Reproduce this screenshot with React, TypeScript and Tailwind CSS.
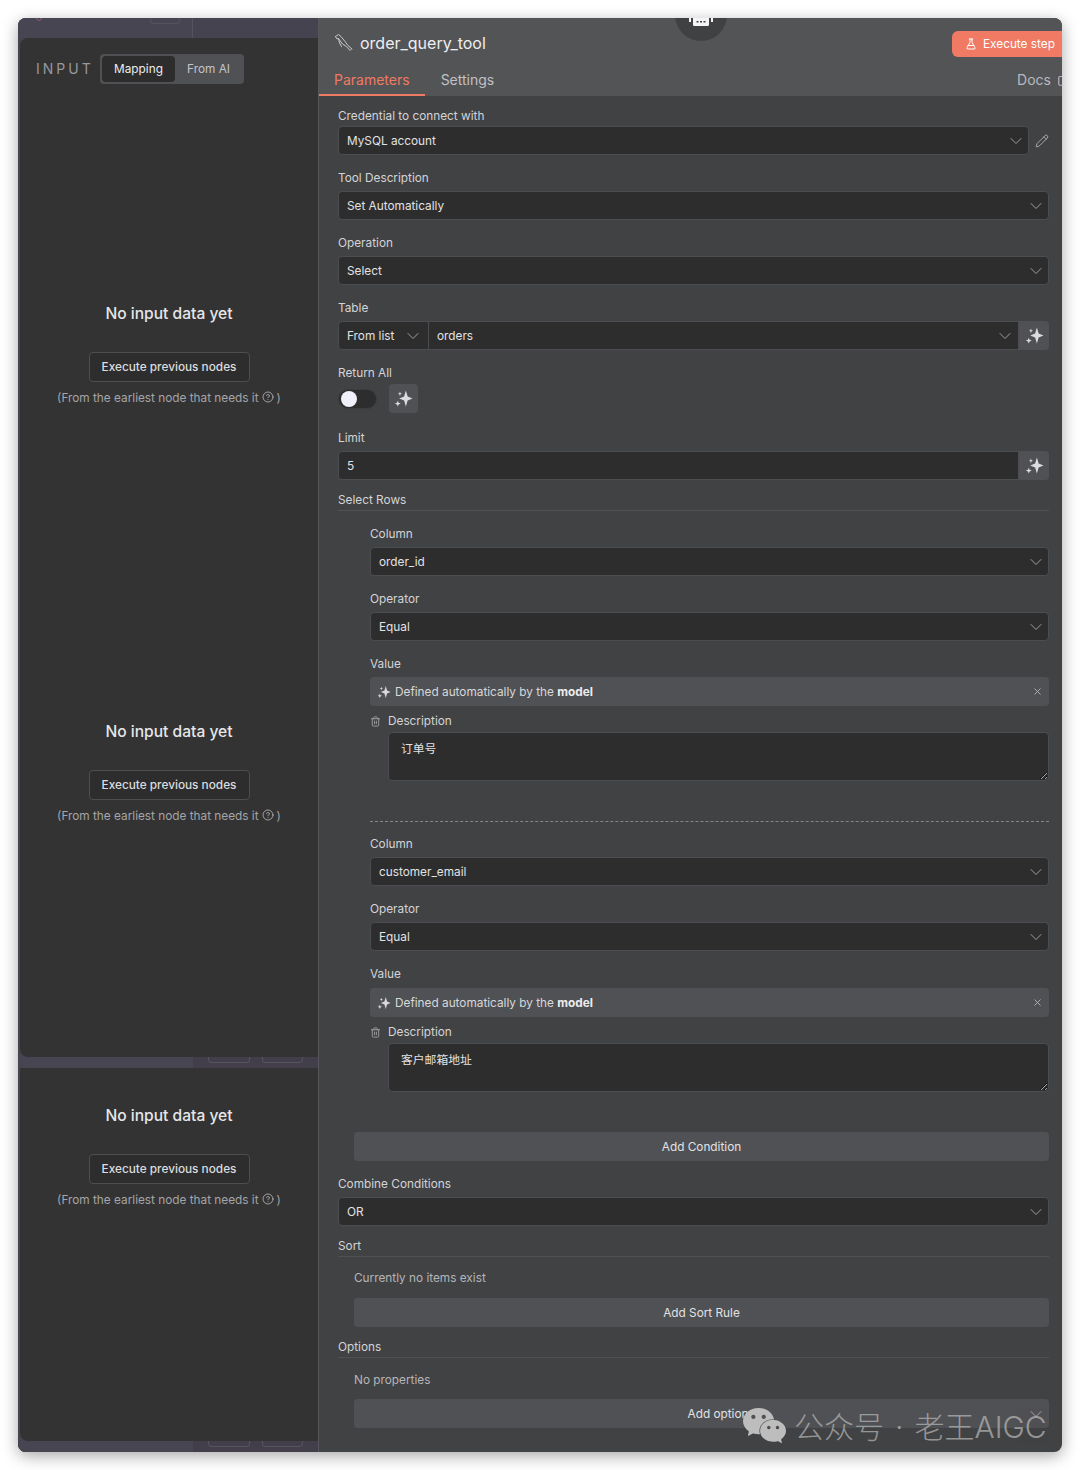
import { ChevronDown, CircleHelp, ExternalLink, FlaskConical, Pencil, Trash2, X } from "lucide-react";
import { SiWechat } from "react-icons/si";

const Sparkle = ({ className }: { className?: string }) => (
    <svg viewBox="0 0 16 16" className={className} fill="currentColor">
        <path d="M10 1.2 11.5 6.3 15.6 8 11.5 9.7 10 14.8 8.5 9.7 4.4 8 8.5 6.3Z" />
        <path d="M5 2 5.5 3.5 6.8 4 5.5 4.5 5 6 4.5 4.5 3.2 4 4.5 3.5Z" />
        <path d="M3.2 9.8 3.9 11.6 5.7 12.3 3.9 13 3.2 14.8 2.5 13 0.7 12.3 2.5 11.6Z" />
    </svg>
);

const Dolphin = () => (
    <svg viewBox="0 0 20 20" className="w-[20px] h-[20px] text-[#c8c8cc]" fill="none" stroke="currentColor" strokeWidth={1} strokeLinejoin="round" strokeLinecap="round">
        <path d="M1.5 3.5 4.5 1.5 7 3.5 11 8.5 14 12.5 18 16" />
        <path d="M1.5 3.5 3 6 4.5 5.5 5.5 10 7.5 13.5" />
        <path d="M4.5 5.5 8.5 11 12.5 13.5 16 17.5 17 16.5" />
    </svg>
);

const Chevron = () => <ChevronDown className="w-5 h-5 shrink-0 text-[#b5b5b8]" strokeWidth={1} />;

const Label = ({ children, className = "" }: { children: React.ReactNode; className?: string }) => (
    <div className={`h-[18px] leading-[18px] text-[11.8px] text-[#d4d4d6] ${className}`}>{children}</div>
);

const Select = ({ value, className = "" }: { value: string; className?: string }) => (
    <div className={`h-[29px] flex items-center justify-between pl-2 pr-[2px] bg-[#2d2d2d] border border-[#4c4d50] rounded text-[11.8px] text-[#e2e2e4] ${className}`}>
        <span className="pt-[2px]">{value}</span>
        <Chevron />
    </div>
);

const SelectField = ({ label, value, className = "" }: { label: string; value: string; className?: string }) => (
    <div className={className}>
        <Label className="mb-1">{label}</Label>
        <Select value={value} />
    </div>
);

const Section = ({ title, className = "" }: { title: string; className?: string }) => (
    <div className={`border-b border-[#505154] pb-px ${className}`}>
        <Label>{title}</Label>
    </div>
);

const WideButton = ({ children, className = "" }: { children: React.ReactNode; className?: string }) => (
    <div className={`ml-[16px] h-[29px] flex items-center justify-center pt-[2px] bg-[#505154] rounded text-[11.8px] text-[#e2e2e4] ${className}`}>
        {children}
    </div>
);

const Condition = ({ column, description, valueGap }: { column: string; description: string; valueGap: string }) => (
    <div className="pl-[32px]">
        <SelectField label="Column" value={column} />
        <SelectField label="Operator" value="Equal" className="mt-[14px]" />
        <div className="mt-[14px]">
            <Label className={valueGap}>Value</Label>
            <div className="h-[29px] flex items-center pl-[7px] pr-[6px] bg-[#505154] rounded text-[11.8px] text-[#d8d8da]">
                <Sparkle className="w-[14px] h-[14px] mr-1 text-[#d8d8da]" />
                <span className="pt-[2px]">
                    Defined automatically by the <b className="font-bold text-[#ececee]">model</b>
                </span>
                <X className="w-[11px] h-[11px] ml-auto text-[#b5b5b8]" />
            </div>
        </div>
        <div className="mt-[6px] flex items-center">
            <Trash2 className="w-[11px] h-[11px] mr-[7px] text-[#a0a0a4]" />
            <Label>Description</Label>
        </div>
        <div className="mt-[2px] pl-[18px]">
            <textarea
                readOnly
                value={description}
                className="block w-full h-[49px] px-3 py-2 bg-[#2d2d2d] border border-[#4c4d50] rounded text-[11.8px] leading-[16px] text-[#e2e2e4] resize-y outline-none"
            />
        </div>
    </div>
);

const TopStrip = () => (
    <div className="h-[20px] shrink-0 flex bg-[#474552]">
        <div className="ml-[18px] -mt-[3px] w-[6px] h-[6px] rounded-full border border-[#8a5a78]" />
        <div className="ml-[108px] w-[30px] h-[6px] border border-t-0 border-[#55535e] rounded-b" />
        <div className="ml-[12px] w-px h-full bg-[#55535e]" />
        <div className="flex-1 bg-[#45434f]" />
    </div>
);

const CanvasStrip = ({ className }: { className: string }) => (
    <div className={`flex shrink-0 bg-[#454450] ${className}`}>
        <div className="w-[175px] shrink-0 bg-[#474552]" />
        <div className="flex-1 bg-[#423f4b] flex gap-[12px] pl-[15px] overflow-hidden">
            <div className="w-[42px] h-[6px] border border-t-0 border-[#57555f] rounded-b" />
            <div className="w-[41px] h-[6px] border border-t-0 border-[#57555f] rounded-b" />
        </div>
    </div>
);

const NoInput = ({ className = "" }: { className?: string }) => (
    <div className={`flex flex-col items-center ${className}`}>
        <div className="h-[18px] leading-[20px] text-[15.6px] font-medium text-[#e6e6e8]">No input data yet</div>
        <div className="mt-[30px] w-[161px] h-[30px] flex items-center justify-center pt-[2px] bg-[#2d2d2d] border border-[#4c4d50] rounded text-[11.8px] font-medium text-[#dcdcde]">
            Execute previous nodes
        </div>
        <div className="mt-[7px] h-[16px] flex items-center pt-[4px] text-[11.8px] text-[#a5a5a9]">
            (From the earliest node that needs it
            <CircleHelp className="w-[12px] h-[12px] mx-[3px] -mt-[4px] text-[#c4c4c8]" strokeWidth={1.5} />)
        </div>
    </div>
);

export default function App() {
    return (
        <div className="w-[1080px] h-[1470px] bg-white p-[18px] font-['Inter','Noto_Sans_CJK_SC',sans-serif]">
            <div className="relative w-[1044px] h-[1434px] flex overflow-hidden rounded-lg bg-[#414244] shadow-[0_4px_16px_rgba(0,0,0,0.35)]">
                {/* input column */}
                <div className="w-[300px] shrink-0 flex flex-col bg-[#454450]">
                    <TopStrip />
                    <div className="ml-[2px] h-[1019px] bg-[#333333] rounded-l-lg">
                        <div className="flex items-center pl-[16px] pt-[16px]">
                            <span className="w-[64px] -mt-[2px] text-[14px] tracking-[3px] text-[#98989c]">INPUT</span>
                            <div className="flex h-[30px] p-[2px] bg-[#505154] rounded text-[11.8px]">
                                <div className="w-[73px] flex items-center justify-center pt-[2px] bg-[#2d2d2d] rounded text-[#ececee]">Mapping</div>
                                <div className="w-[67px] flex items-center justify-center pt-[2px] text-[#c4c4c8]">From AI</div>
                            </div>
                        </div>
                        <NoInput className="mt-[220px]" />
                        <NoInput className="mt-[317px]" />
                    </div>
                    <CanvasStrip className="h-[11px]" />
                    <div className="ml-[2px] h-[373px] bg-[#333333] rounded-bl-lg pt-[38px]">
                        <NoInput />
                    </div>
                    <CanvasStrip className="h-[11px]" />
                </div>

                {/* parameters column */}
                <div className="flex-1 min-w-0 flex flex-col border-l border-[#56575a]">
                    <div className="h-[78px] shrink-0 bg-[#535456]">
                        <div className="flex items-center pt-[13px] pl-[15px]">
                            <div className="-mt-[2px]"><Dolphin /></div>
                            <span className="ml-[6px] -mt-[2px] text-[16px] text-[#eeeef0]">order_query_tool</span>
                            <div className="ml-auto w-[110px] h-[26px] flex items-center pl-[13px] gap-[6px] bg-[#f07a64] rounded-l-md text-[11.8px] text-white">
                                <FlaskConical className="w-[12px] h-[12px]" />
                                <span className="pt-px">Execute step</span>
                            </div>
                        </div>
                        <div className="mt-[14px] flex items-start text-[14px] leading-[18px]">
                            <div className="h-[25px] px-[15px] border-b-2 border-[#ee7a64] text-[#ee7a64]">Parameters</div>
                            <div className="ml-[16px] text-[#c0c0c6]">Settings</div>
                            <div className="ml-auto -mr-[9px] flex items-center gap-[6px] text-[#b8b8be]">
                                Docs
                                <ExternalLink className="w-[14px] h-[14px]" />
                            </div>
                        </div>
                    </div>

                    <div className="pt-[11px] pl-[19px] pr-[13px] flex flex-col">
                        <div className="flex items-end">
                            <div className="flex-1">
                                <Label className="mb-px">Credential to connect with</Label>
                                <Select value="MySQL account" />
                            </div>
                            <div className="w-[20px] h-[29px] flex items-center justify-end pt-px">
                                <Pencil className="w-[14px] h-[14px] text-[#c8c8cc]" strokeWidth={1.3} />
                            </div>
                        </div>
                        <SelectField label="Tool Description" value="Set Automatically" className="mt-[14px]" />
                        <SelectField label="Operation" value="Select" className="mt-[14px]" />
                        <div className="mt-[14px]">
                            <Label className="mb-1">Table</Label>
                            <div className="flex h-[29px] text-[11.8px] text-[#e2e2e4]">
                                <div className="w-[91px] flex items-center justify-between pl-2 pr-[5px] bg-[#2d2d2d] border border-[#4c4d50] rounded-l">
                                    <span className="pt-[2px]">From list</span>
                                    <Chevron />
                                </div>
                                <div className="flex-1 flex items-center justify-between pl-2 pr-[3px] bg-[#2d2d2d] border-y border-r border-[#4c4d50]">
                                    <span className="pt-[2px]">orders</span>
                                    <Chevron />
                                </div>
                                <div className="w-[30px] flex items-center justify-center bg-[#505154] rounded-r">
                                    <Sparkle className="w-[19px] h-[19px] text-[#dcdcde]" />
                                </div>
                            </div>
                        </div>
                        <div className="mt-[14px]">
                            <Label>Return All</Label>
                            <div className="h-[33px] flex items-center gap-[12px]">
                                <div className="w-[39px] h-[20px] flex items-center pl-[2px] bg-[#2d2d2d] border border-[#3b3c3e] rounded-full">
                                    <div className="w-[16px] h-[16px] rounded-full bg-[#f0f0fa]" />
                                </div>
                                <div className="w-[29px] h-[29px] flex items-center justify-center bg-[#505154] rounded">
                                    <Sparkle className="w-[19px] h-[19px] text-[#dcdcde]" />
                                </div>
                            </div>
                        </div>
                        <div className="mt-[14px]">
                            <Label className="mb-1">Limit</Label>
                            <div className="flex h-[29px] text-[11.8px] text-[#e2e2e4]">
                                <div className="flex-1 flex items-center pl-2 pt-[2px] bg-[#2d2d2d] border border-[#4c4d50] rounded-l">5</div>
                                <div className="w-[30px] flex items-center justify-center bg-[#505154] rounded-r">
                                    <Sparkle className="w-[19px] h-[19px] text-[#dcdcde]" />
                                </div>
                            </div>
                        </div>
                        <Section title="Select Rows" className="mt-[11px]" />
                        <div className="mt-[14px]">
                            <Condition column="order_id" description="订单号" valueGap="mb-1" />
                        </div>
                        <div className="mt-[40px] ml-[32px] border-t border-dashed border-[#85868a]" />
                        <div className="mt-[13px]">
                            <Condition column="customer_email" description="客户邮箱地址" valueGap="mb-[5px]" />
                        </div>
                        <WideButton className="mt-[40px]">Add Condition</WideButton>
                        <SelectField label="Combine Conditions" value="OR" className="mt-[14px]" />
                        <Section title="Sort" className="mt-[11px]" />
                        <div className="mt-[12px] ml-[16px] h-[18px] leading-[18px] text-[11.8px] text-[#b5b5b9]">Currently no items exist</div>
                        <WideButton className="mt-[11px]">Add Sort Rule</WideButton>
                        <Section title="Options" className="mt-[11px] pb-[2px]" />
                        <div className="mt-[13px] ml-[16px] h-[18px] leading-[18px] text-[11.8px] text-[#b5b5b9]">No properties</div>
                        <div className="relative mt-[10px]">
                            <WideButton className="pl-[33px]">Add option</WideButton>
                            <ChevronDown className="absolute right-[3px] top-[5px] w-5 h-5 text-[#b5b5b8]" strokeWidth={1} />
                        </div>
                    </div>
                </div>

                {/* node badge peeking in from the canvas */}
                <div className="absolute left-[657px] -top-[29px] w-[52px] h-[52px] flex items-end justify-center pb-[14px] rounded-full bg-[#404143]">
                    <svg viewBox="0 0 26 10" className="w-[26px] h-[10px]" fill="#f4f4f6">
                        <rect x="5" y="0" width="16" height="9" rx="1.5" />
                        <rect x="1" y="0" width="2" height="5" />
                        <rect x="23" y="0" width="2" height="5" />
                        <rect x="8.5" y="4" width="2" height="1.5" fill="#404143" />
                        <rect x="12" y="4" width="2" height="1.5" fill="#404143" />
                        <rect x="15.5" y="4" width="2" height="1.5" fill="#404143" />
                    </svg>
                </div>

                {/* watermark */}
                <div className="absolute left-[725px] top-[1386px] flex items-center text-[#b9b9b9]">
                    <SiWechat className="w-[43px] h-[43px] text-[#bdbdbd]" />
                    <div className="ml-[8px] mt-[2px] flex items-center text-[30px] leading-[38px] font-light opacity-70 whitespace-nowrap">
                        <span>公众号</span>
                        <span className="mx-[11px]">·</span>
                        <span>老王AIGC</span>
                    </div>
                </div>
            </div>
        </div>
    );
}
